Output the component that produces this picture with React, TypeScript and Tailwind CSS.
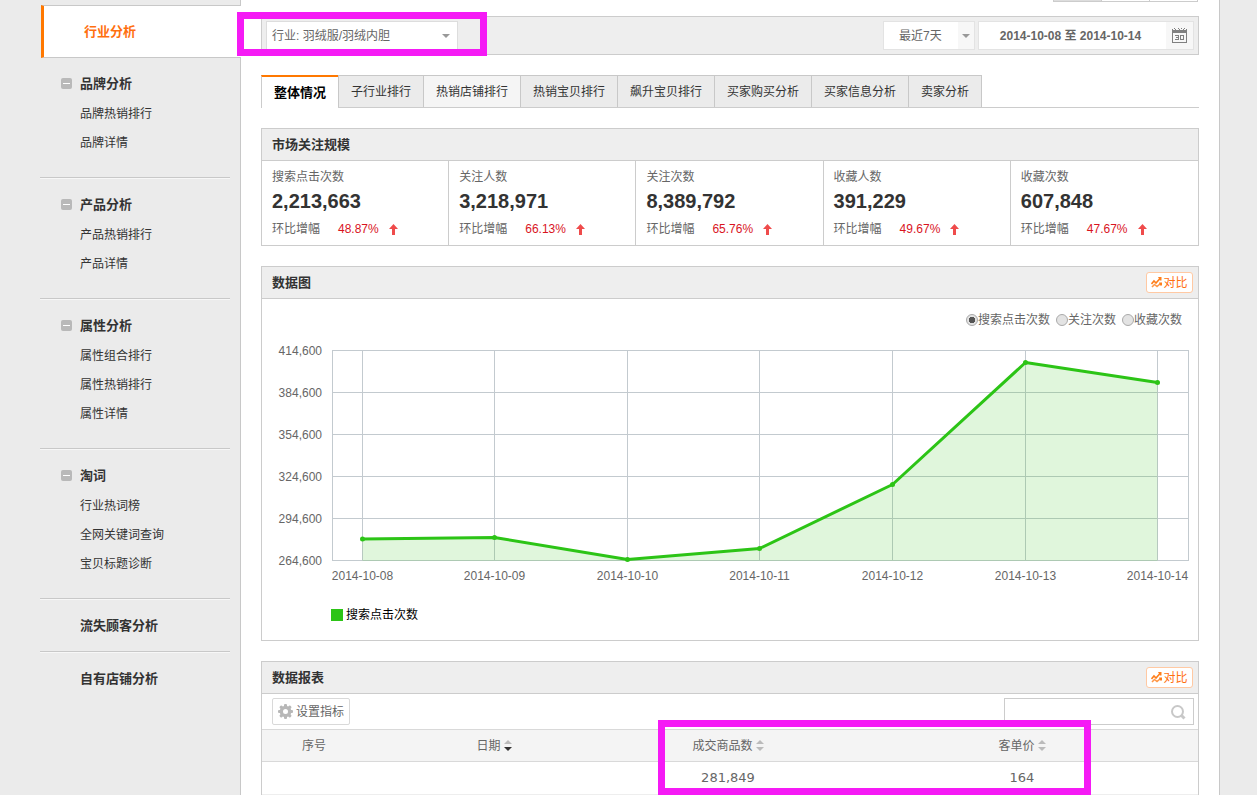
import React from 'react';

type NavGroup = {
  title: string;
  links: string[];
};

type Stat = {
  label: string;
  value: string;
  growth: string;
};

const navGroups: NavGroup[] = [
  { title: '品牌分析', links: ['品牌热销排行', '品牌详情'] },
  { title: '产品分析', links: ['产品热销排行', '产品详情'] },
  { title: '属性分析', links: ['属性组合排行', '属性热销排行', '属性详情'] },
  { title: '淘词', links: ['行业热词榜', '全网关键词查询', '宝贝标题诊断'] },
  { title: '流失顾客分析', links: [] },
  { title: '自有店铺分析', links: [] },
];

const tabs = [
  '整体情况',
  '子行业排行',
  '热销店铺排行',
  '热销宝贝排行',
  '飙升宝贝排行',
  '买家购买分析',
  '买家信息分析',
  '卖家分析',
];

const stats: Stat[] = [
  { label: '搜索点击次数', value: '2,213,663', growth: '48.87%' },
  { label: '关注人数', value: '3,218,971', growth: '66.13%' },
  { label: '关注次数', value: '8,389,792', growth: '65.76%' },
  { label: '收藏人数', value: '391,229', growth: '49.67%' },
  { label: '收藏次数', value: '607,848', growth: '47.67%' },
];

const metrics = ['搜索点击次数', '关注次数', '收藏次数'];

const yLabels = ['414,600', '384,600', '354,600', '324,600', '294,600', '264,600'];

const points = [
  { date: '2014-10-08', x: 100.5, y: 199 },
  { date: '2014-10-09', x: 232.5, y: 197.5 },
  { date: '2014-10-10', x: 365.5, y: 219.5 },
  { date: '2014-10-11', x: 497.5, y: 208.5 },
  { date: '2014-10-12', x: 630.5, y: 144.5 },
  { date: '2014-10-13', x: 763.5, y: 22.5 },
  { date: '2014-10-14', x: 895.5, y: 42.5 },
];

const Caret = () => (
  <svg width="8" height="4" viewBox="0 0 8 4" className="fill-[#999]" aria-hidden="true">
    <path d="M0 0h8L4 4z" />
  </svg>
);

const CalendarIcon = () => (
  <svg width="15" height="15" viewBox="0 0 15 15" shapeRendering="crispEdges" aria-hidden="true">
    <path d="M0 1h1v1h2V1h1v1h3V1h1v1h3V1h1v1h2V1h1v4H0z" fill="#808080" />
    <path d="M2 0h1v1H2zM6 0h1v1H6zM9 0h1v1H9zM12 0h1v1h-1z" fill="#808080" />
    <path d="M.5 5v9.500h14V5" fill="none" stroke="#808080" />
    <path d="M3 7.500h3.500v4H3M4 9.500h3M8.500 7.500h3v4h-3z" fill="none" stroke="#808080" />
  </svg>
);

const ArrowUp = () => (
  <svg width="9" height="11" viewBox="0 0 9 11" className="fill-[#ef4b4b]" aria-hidden="true">
    <path d="M4.500 0L9 5H6v6H3V5H0z" />
  </svg>
);

const CompareIcon = () => (
  <svg width="11" height="11" viewBox="0 0 11 11" fill="none" stroke="#ff7e1a" aria-hidden="true">
    <path d="M.5 7L3 4l2 2 4-4.500" strokeWidth="1.600" />
    <path d="M1 10L3.500 7.500 6 9.500 9.500 6.500" strokeWidth="1.600" strokeOpacity="0.8" />
    <path d="M7 0h3.500v3.500H9zM8 5.500h3v3H9z" fill="#ff7e1a" stroke="none" />
  </svg>
);

const GearIcon = () => (
  <svg width="15" height="15" viewBox="0 0 15 15" aria-hidden="true">
    <g fill="#b8b8b8">
      <rect x="6" width="3" height="15" rx="1" />
      <rect x="6" width="3" height="15" rx="1" transform="rotate(45 7.5 7.5)" />
      <rect x="6" width="3" height="15" rx="1" transform="rotate(90 7.5 7.5)" />
      <rect x="6" width="3" height="15" rx="1" transform="rotate(135 7.5 7.5)" />
      <circle cx="7.500" cy="7.500" r="5.800" />
    </g>
    <circle cx="7.500" cy="7.500" r="2.500" fill="#fff" />
  </svg>
);

const SearchIcon = () => (
  <svg width="16" height="16" viewBox="0 0 16 16" fill="none" stroke="#c8c8c8" aria-hidden="true">
    <circle cx="7.500" cy="7.500" r="5.500" strokeWidth="2" />
    <path d="M11 11l3.500 3.500" strokeWidth="3" />
  </svg>
);

const SortIcon = ({ descending = false }: { descending?: boolean }) => (
  <svg width="8" height="11" viewBox="0 0 8 11" aria-hidden="true">
    <path d="M4 0l4 4H0z" fill="#bbb" />
    <path d="M0 7h8l-4 4z" fill={descending ? '#333' : '#bbb'} />
  </svg>
);

const Sidebar = () => (
  <aside className="w-[201px] flex-shrink-0 border-r border-[#c8c8c8] pt-[5px]">
    <a
      href="#industry"
      className="ml-px -mr-px flex h-[53px] items-center border-y border-l-3 border-y-[#c8c8c8] border-l-[#ff7800] bg-white pl-10 text-[13px] font-bold text-[#ff6f0f]"
    >
      行业分析
    </a>
    <nav>
      {navGroups.map((group, index) => (
        <div
          key={group.title}
          className={`mr-[10px] pt-[10px] ${group.links.length ? 'pb-5' : 'pb-[10px]'} ${
            index < navGroups.length - 1 ? 'mb-px border-b border-[#c8c8c8] shadow-[0_1px_0_#f7f7f7]' : ''
          }`}
        >
          {group.links.length > 0 ? (
            <button type="button" className="flex h-[31px] items-center gap-2 pl-[21px] text-[13px] font-bold">
              <span className="flex h-[11px] w-[11px] items-center justify-center rounded-xs bg-[#b9b9b9]">
                <span className="h-px w-[7px] bg-white" />
              </span>
              {group.title}
            </button>
          ) : (
            <a href="#analysis" className="flex h-[31px] items-center pl-10 text-[13px] font-bold">
              {group.title}
            </a>
          )}
          <ul>
            {group.links.map((link) => (
              <li key={link} className="flex h-[29px] items-center pl-10">
                <a href="#report">{link}</a>
              </li>
            ))}
          </ul>
        </div>
      ))}
    </nav>
  </aside>
);

const FilterBar = () => (
  <div className="relative mt-[14px] flex h-[39px] items-center border border-[#ccc] bg-[#eee] px-1 text-[#666]">
    <div className="relative">
      <select
        aria-label="行业"
        className="h-[29px] w-[192px] appearance-none border border-[#ddd] bg-white pl-[5px] pr-6"
      >
        <option>行业: 羽绒服/羽绒内胆</option>
      </select>
      <span className="pointer-events-none absolute inset-y-0 right-2 flex items-center">
        <Caret />
      </span>
    </div>
    <div className="relative ml-auto">
      <select
        aria-label="时间范围"
        className="h-[29px] w-[92px] appearance-none border border-[#e3e3e3] bg-white pl-[15px]"
      >
        <option>最近7天</option>
      </select>
      <span className="pointer-events-none absolute inset-y-px right-px flex w-4 items-center justify-center bg-[#f7f7f7]">
        <Caret />
      </span>
    </div>
    <div className="ml-[3px] flex h-[29px] w-[216px] border border-[#e3e3e3] bg-white">
      <input
        type="text"
        readOnly
        aria-label="日期"
        value="2014-10-08 至 2014-10-14"
        className="min-w-0 flex-1 pr-1 text-center font-bold"
      />
      <button type="button" aria-label="选择日期" className="flex w-[27px] items-center justify-center bg-[#f7f7f7]">
        <CalendarIcon />
      </button>
    </div>
    <div className="pointer-events-none absolute -left-[25px] -top-[5px] h-[44px] w-[250px] border-7 border-[#f51af5]" />
  </div>
);

const Tabs = () => (
  <div className="mt-5 flex h-[33px] border-b border-[#ccc]">
    {tabs.map((tab, index) => {
      if (index === 0) {
        return (
          <button
            key={tab}
            type="button"
            className="-mb-px border-l border-t-2 border-l-[#ccc] border-t-[#ff7800] bg-white px-3 text-[13px] font-bold text-black"
          >
            {tab}
          </button>
        );
      }
      return (
        <button
          key={tab}
          type="button"
          className={`border-l border-t border-[#c8c8c8] px-3 last:border-r ${index === 2 ? 'bg-[#f5f5f5]' : 'bg-[#ebebeb]'}`}
        >
          {tab}
        </button>
      );
    })}
  </div>
);

const PanelHeader = ({ title, comparable = false }: { title: string; comparable?: boolean }) => (
  <div className="flex h-8 items-center justify-between border-b border-[#ccc] bg-[#eee] pl-[10px] pr-[5px]">
    <h2 className="text-[13px] font-bold">{title}</h2>
    {comparable && (
      <button
        type="button"
        className="flex h-[21px] w-[47px] items-center justify-center gap-px rounded-[3px] border border-[#ffc9a3] bg-white text-[#ff6f0f]"
      >
        <CompareIcon />
        对比
      </button>
    )}
  </div>
);

const StatsPanel = () => (
  <section className="mt-5 border border-[#ccc]">
    <PanelHeader title="市场关注规模" />
    <div className="grid grid-cols-5">
      {stats.map((stat) => (
        <div key={stat.label} className="h-[84px] border-r border-[#ccc] pl-[10px] pt-[6px] text-[#666] last:border-r-0">
          <p className="leading-5">{stat.label}</p>
          <p className="text-[20px] leading-[28px] font-bold text-[#333]">{stat.value}</p>
          <p className="flex items-center pt-1 leading-5">
            环比增幅
            <span className="ml-[18px] mr-[10px] text-[#d9141e]">{stat.growth}</span>
            <ArrowUp />
          </p>
        </div>
      ))}
    </div>
  </section>
);

const TrendChart = () => {
  const line = points.map((point) => `${point.x},${point.y}`).join(' ');

  return (
    <svg viewBox="0 0 936 250" className="block w-full" role="img" aria-label="搜索点击次数">
      <g stroke="#c3cacf" shapeRendering="crispEdges">
        {yLabels.map((label, index) => (
          <line key={label} x1="70" x2="927" y1={10.5 + index * 42} y2={10.5 + index * 42} />
        ))}
        {[70.5, ...points.map((point) => point.x), 926.5].map((x) => (
          <line key={x} x1={x} x2={x} y1="10" y2="221" />
        ))}
      </g>
      <polygon points={`100.5,221 ${line} 895.5,221`} fill="#2cc416" fillOpacity="0.15" />
      <polyline points={line} fill="none" stroke="#2cc416" strokeWidth="3" strokeLinejoin="round" />
      {points.map((point) => (
        <circle key={point.date} cx={point.x} cy={point.y} r="2.5" fill="#2cc416" />
      ))}
      <g fill="#666" fontSize="12">
        {yLabels.map((label, index) => (
          <text key={label} x="60" y={15 + index * 42} textAnchor="end">
            {label}
          </text>
        ))}
        {points.map((point) => (
          <text key={point.date} x={point.x} y="240" textAnchor="middle">
            {point.date}
          </text>
        ))}
      </g>
    </svg>
  );
};

const ChartPanel = () => (
  <section className="mt-5 border border-[#ccc]">
    <PanelHeader title="数据图" comparable />
    <div className="flex h-[41px] items-center justify-end gap-[6px] pr-4 text-[#666]">
      {metrics.map((metric, index) => (
        <label key={metric} className="flex items-center">
          <input
            type="radio"
            name="metric"
            defaultChecked={index === 0}
            className="h-3 w-3 appearance-none rounded-full border border-[#aaa] bg-[#e3e3e3] checked:bg-[radial-gradient(circle,#555_0_3px,#e3e3e3_3px)]"
          />
          {metric}
        </label>
      ))}
    </div>
    <TrendChart />
    <div className="flex h-[50px] items-center gap-[3px] pl-[69px] text-black">
      <span className="h-3 w-3 bg-[#2cc416]" />
      搜索点击次数
    </div>
  </section>
);

const ReportPanel = () => (
  <section className="mt-5 border border-b-0 border-[#ccc]">
    <PanelHeader title="数据报表" comparable />
    <div className="flex h-[35px] items-center justify-between pl-[10px] pr-1 text-[#666]">
      <button
        type="button"
        className="flex h-[27px] w-[78px] items-center justify-center gap-[3px] rounded-xs border border-[#d9d9d9] bg-white"
      >
        <GearIcon />
        设置指标
      </button>
      <form className="flex h-[27px] w-[190px] items-center border border-[#ccc] pr-[7px]">
        <input type="search" aria-label="搜索" className="min-w-0 flex-1 px-2 outline-none" />
        <button type="button" aria-label="搜索">
          <SearchIcon />
        </button>
      </form>
    </div>
    <div className="relative">
      <table className="w-full table-fixed text-center text-[#666]">
        <colgroup>
          <col className="w-[104px]" />
          <col className="w-[256px]" />
          <col className="w-[212px]" />
          <col className="w-[66px]" />
          <col className="w-[244px]" />
          <col />
        </colgroup>
        <thead>
          <tr className="h-8 border-y border-[#d9d9d9] bg-[#f4f4f4]">
            <th className="font-normal">序号</th>
            <th className="font-normal">
              <button type="button" className="inline-flex items-center gap-[3px]">
                日期
                <SortIcon descending />
              </button>
            </th>
            <th className="font-normal">
              <button type="button" className="inline-flex items-center gap-[3px]">
                成交商品数
                <SortIcon />
              </button>
            </th>
            <td />
            <th className="font-normal">
              <button type="button" className="inline-flex items-center gap-[3px]">
                客单价
                <SortIcon />
              </button>
            </th>
            <td />
          </tr>
        </thead>
        <tbody className="font-['DejaVu_Sans',sans-serif] text-[13px]">
          <tr className="h-[33px] border-b border-[#eee]">
            <td />
            <td />
            <td>281,849</td>
            <td />
            <td>164</td>
            <td />
          </tr>
        </tbody>
      </table>
      <div className="pointer-events-none absolute -top-[9px] left-[396px] h-[75px] w-[433px] border-7 border-[#f51af5]" />
    </div>
  </section>
);

const App: React.FC = () => (
  <div className="flex min-h-screen bg-[#ebebeb] pl-10 pr-[37px] font-['Liberation_Sans','Noto_Sans_CJK_SC',sans-serif] text-[12px] leading-[18px] text-[#333]">
    <Sidebar />
    <main className="min-w-0 flex-1 border-r border-[#c8c8c8] bg-white px-5">
      {/* bottom edge of the page switcher above the filters */}
      <div className="flex h-[2px] justify-end pr-px">
        <div className="flex w-[145px] divide-x divide-[#ccc] border-x border-b border-[#ccc]">
          <span className="flex-1 bg-[#ddd]" />
          <span className="flex-1" />
          <span className="flex-1" />
        </div>
      </div>
      <FilterBar />
      <Tabs />
      <StatsPanel />
      <ChartPanel />
      <ReportPanel />
    </main>
  </div>
);

export default App;
